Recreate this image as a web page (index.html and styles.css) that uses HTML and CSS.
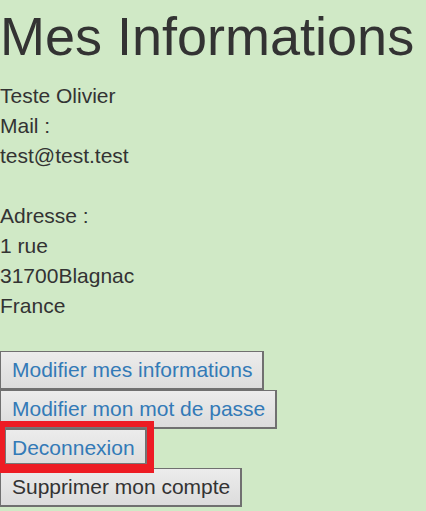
FILE: index.html
```html
<!DOCTYPE html>
<html lang="fr">
<head>
<meta charset="utf-8">
<title>Mes Informations</title>
<link rel="stylesheet" href="styles.css">
</head>
<body>
<h1 class="title">Mes Informations</h1>
<div class="info">
  <div class="line">Teste Olivier</div>
  <div class="line">Mail :</div>
  <div class="line">test@test.test</div>
  <div class="line blank"></div>
  <div class="line">Adresse :</div>
  <div class="line">1 rue</div>
  <div class="line">31700Blagnac</div>
  <div class="line">France</div>
</div>
<div class="actions">
  <button class="btn link">Modifier mes informations</button>
  <button class="btn link">Modifier mon mot de passe</button>
  <span class="highlight-wrap">
    <button class="btn link">Deconnexion</button>
    <span class="highlight"></span>
  </span>
  <button class="btn">Supprimer mon compte</button>
</div>
</body>
</html>
```
FILE: styles.css
```css
html, body {
  margin: 0;
  padding: 0;
  background: #d0e9c6;
}
body {
  font-family: "Liberation Sans", Arial, sans-serif;
  color: #333333;
  font-size: 21px;
  line-height: 30px;
  min-height: 511px;
}
.title {
  font-size: 54px;
  font-weight: normal;
  line-height: 59.4px;
  margin: 7px 0 14.6px 0;
  color: #333333;
}
.info {
  margin-bottom: 30px;
}
.line {
  height: 30px;
}
.actions {
  display: flex;
  flex-direction: column;
  align-items: flex-start;
}
.btn {
  font-family: "Liberation Sans", Arial, sans-serif;
  font-size: 21px;
  line-height: 30px;
  height: 39px;
  padding: 0 10px 0 11px;
  margin: 0;
  color: #333333;
  background: linear-gradient(#ececec, #dcdcdc);
  border-style: solid;
  border-color: #707070;
  border-width: 1px 2px 2px 1px;
  border-radius: 0;
  cursor: pointer;
}
.btn.link {
  color: #337ab7;
}
.highlight-wrap {
  position: relative;
  display: block;
}
.highlight-wrap .btn {
  display: block;
}
.highlight {
  position: absolute;
  left: 0;
  top: -8px;
  width: 154px;
  height: 52px;
  box-sizing: border-box;
  border: solid #ed1c24;
  border-width: 6px 7px 9px 5px;
  box-shadow: inset 0 0 0 1px #777777;
  pointer-events: none;
}
```
